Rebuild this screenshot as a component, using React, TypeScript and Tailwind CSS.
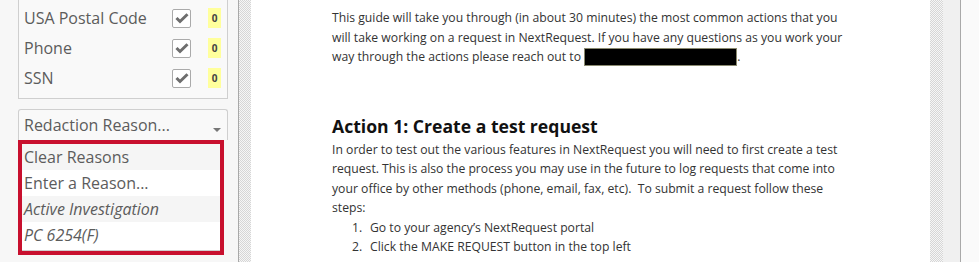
import React from "react";

const detectors = ["USA Postal Code", "Phone", "SSN"];
const reasons = [
  { label: "Clear Reasons", italic: false },
  { label: "Enter a Reason...", italic: false },
  { label: "Active Investigation", italic: true },
  { label: "PC 6254(F)", italic: true },
];

function CheckBox() {
  return (
    <span className="flex h-[19px] w-[19px] items-center justify-center rounded-[2px] border border-[#aaa] bg-white">
      <svg width="14" height="12" viewBox="0 0 14 12">
        <path d="M1.5 6 L5 9.5 L12.5 2.2" fill="none" stroke="#6e6e6e" strokeWidth="3" />
      </svg>
    </span>
  );
}

function Hatch({ className = "" }: { className?: string }) {
  return (
    <div
      className={`bg-[repeating-conic-gradient(#d6d6d6_0_25%,#f6f6f6_0_50%)] bg-[length:2px_2px] ${className}`}
    />
  );
}

export default function App() {
  return (
    <div className="flex h-[262px] w-[979px] overflow-hidden bg-white font-['Open_Sans',sans-serif]">
      {/* sidebar */}
      <div className="w-[238px] shrink-0 bg-[#f7f7f7] pl-[18px] pr-[10px]">
        <div className="border-x border-b border-[#cfcfcf] bg-[#f9f9f9] pt-[3px] pb-[5px]">
          {detectors.map((d) => (
            <div key={d} className="flex h-[30px] items-center pl-[5px] pr-[6px]">
              <span className="flex-1 text-[16px] text-[#5c5c5c]">{d}</span>
              <CheckBox />
              <span className="ml-[17px] flex h-[20px] w-[13px] items-center justify-center bg-[#ffff9c] text-[10px] font-bold text-[#444]">
                0
              </span>
            </div>
          ))}
        </div>

        <div className="mt-[10px] flex h-[31px] items-center rounded-t-[3px] border-x border-t border-[#cfcfcf] bg-[#f9f9f9] pl-[5px] pr-[6px]">
          <span className="flex-1 text-[16px] text-[#5c5c5c]">Redaction Reason...</span>
          <svg width="8" height="4" viewBox="0 0 8 4" className="mt-[10px]">
            <path d="M0 0 H8 L4 4 Z" fill="#777" />
          </svg>
        </div>
        <div className="w-[206px] border-4 border-[#c8102e] bg-white">
          <div className="border-b border-[#cfcfcf] pb-[2px]">
            {reasons.map((r, i) => (
              <div
                key={r.label}
                className={`flex h-[26px] items-center pl-[2px] text-[16px] text-[#5c5c5c] ${
                  i % 2 === 0 ? "bg-[#f5f5f5]" : "bg-white"
                } ${r.italic ? "italic" : ""}`}
              >
                {r.label}
              </div>
            ))}
          </div>
        </div>
      </div>

      {/* left divider */}
      <div className="w-px shrink-0 bg-[#a9a9a9]" />
      <Hatch className="w-[12px] shrink-0" />

      {/* document page */}
      <div className="w-[679px] shrink-0 bg-white pl-[81px] pt-[8px] text-[12.2px] leading-[19.5px] text-[#333]">
        <p className="whitespace-nowrap">
          This guide will take you through (in about 30 minutes) the most common actions that you
          <br />
          will take working on a request in NextRequest. If you have any questions as you work your
          <br />
          way through the actions please reach out to{" "}
          <span className="inline-block h-[18px] w-[153px] border border-[#8a8a70] bg-black align-[-5px]" />.
        </p>

        <h2 className="mt-[47px] text-[17.6px] font-bold leading-[24px] text-[#111]">
          Action 1: Create a test request
        </h2>
        <p className="mt-[2px] whitespace-nowrap">
          In order to test out the various features in NextRequest you will need to first create a test
          <br />
          request. This is also the process you may use in the future to log requests that come into
          <br />
          your office by other methods (phone, email, fax, etc).&nbsp; To submit a request follow these
          <br />
          steps:
        </p>
        <ol className="whitespace-nowrap">
          <li className="flex">
            <span className="w-[38px] pl-[20px]">1.</span>
            <span>Go to your agency&rsquo;s NextRequest portal</span>
          </li>
          <li className="flex">
            <span className="w-[38px] pl-[20px]">2.</span>
            <span>Click the MAKE REQUEST button in the top left</span>
          </li>
        </ol>
      </div>

      {/* right gutter */}
      <Hatch className="w-[13px] shrink-0" />
      <div className="w-[17px] shrink-0 bg-[#f0f0f0]" />
      <div className="w-px shrink-0 bg-[#a9a9a9]" />
      <div className="flex-1 bg-[#fafafa]" />
    </div>
  );
}
